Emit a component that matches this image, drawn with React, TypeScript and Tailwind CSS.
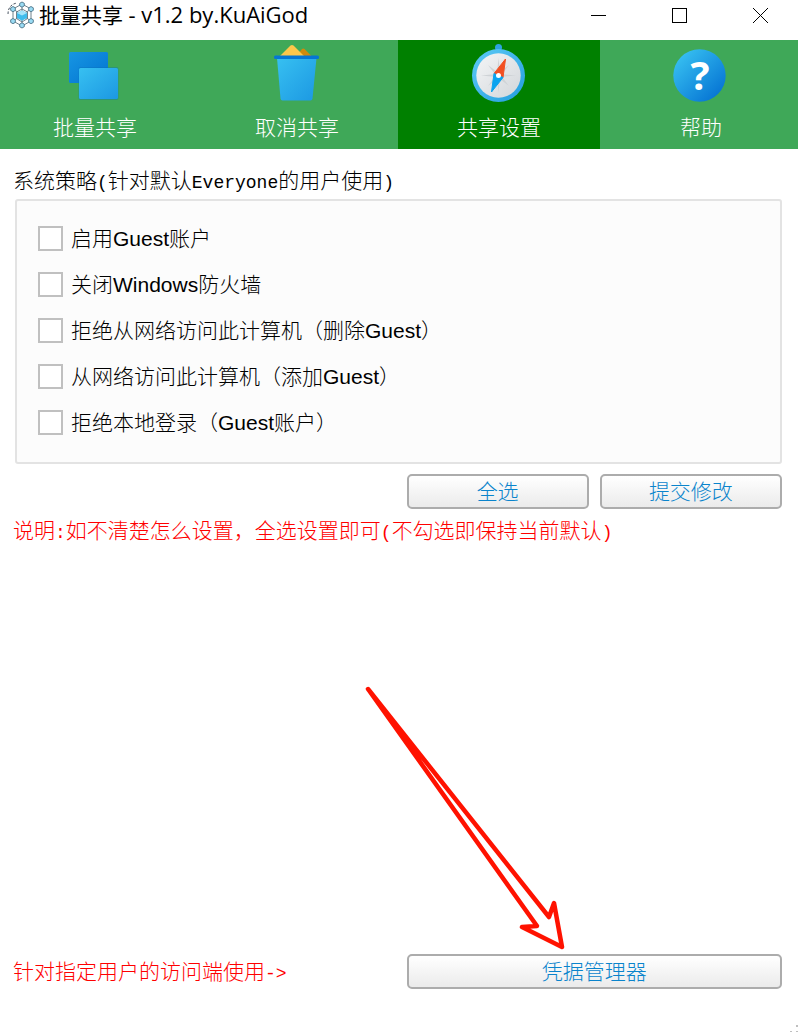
import { useState } from "react";

type Policy = {
  id: string;
  label: string;
};

const policies: Policy[] = [
  { id: "enable-guest", label: "启用Guest账户" },
  { id: "firewall", label: "关闭Windows防火墙" },
  { id: "deny-network", label: "拒绝从网络访问此计算机（删除Guest）" },
  { id: "allow-network", label: "从网络访问此计算机（添加Guest）" },
  { id: "deny-local", label: "拒绝本地登录（Guest账户）" },
];

const AppLogo = () => (
  <svg width="28" height="28" viewBox="0 0 28 28" fill="none" aria-hidden="true">
    <g stroke="#5d7480" strokeWidth="0.9">
      <path d="M15 3v22M6 8l18 12M24 8L6 20M6 8v12l9 5 9-5V8l-9-5z" />
      <path d="M15 8l5.500 3v6.500L15 21l-5.500-3.500V11z" />
    </g>
    <path d="M1 13C1 7 4 3 10 2" stroke="#4b5563" strokeDasharray="2.500 1.500" />
    <g fill="#9adcf5" stroke="#4d7488" strokeWidth="0.9">
      <path d="M15 1l2.300 1.300v2.600L15 6.200l-2.300-1.300V2.300z" />
      <path d="M6 5.500l2.300 1.300v2.600L6 10.700 3.700 9.400V6.800z" />
      <path d="M24 5.500l2.300 1.300v2.600L24 10.700l-2.300-1.300V6.800z" />
      <path d="M6 17.500l2.300 1.300v2.600L6 22.700l-2.300-1.300v-2.600z" />
      <path d="M24 17.500l2.300 1.300v2.600L24 22.700l-2.300-1.300v-2.600z" />
      <path d="M15 21.800l2.300 1.300v2.600L15 27l-2.300-1.300v-2.600z" />
    </g>
    <path d="M15 9.500l5 2.500v5l-5 2.700-5-2.700v-5z" fill="#3fbcec" />
    <path d="M15 9.500l5 2.500-5 2.500-5-2.500z" fill="#a5e4fa" />
  </svg>
);

const ShareIcon = () => (
  <svg width="60" height="60" viewBox="0 0 60 60" aria-hidden="true">
    <defs>
      <linearGradient id="shareBack" x1="0" y1="0" x2="1" y2="1">
        <stop offset="0" stopColor="#1796e3" />
        <stop offset="1" stopColor="#0273d0" />
      </linearGradient>
      <linearGradient id="shareFront" x1="0" y1="0" x2="1" y2="1">
        <stop offset="0" stopColor="#37c0f1" />
        <stop offset="1" stopColor="#1c98e2" />
      </linearGradient>
    </defs>
    <rect x="4" y="8" width="39" height="31" rx="1.500" fill="url(#shareBack)" />
    <rect x="13.500" y="23" width="40" height="33" rx="2" fill="#0a6fb5" opacity="0.35" />
    <rect x="14" y="24" width="39" height="31" rx="1.500" fill="url(#shareFront)" />
  </svg>
);

const BinIcon = () => (
  <svg width="60" height="60" viewBox="0 0 60 60" aria-hidden="true">
    <defs>
      <linearGradient id="binBody" x1="0" y1="0" x2="1" y2="1">
        <stop offset="0" stopColor="#37c0f1" />
        <stop offset="1" stopColor="#1c98e2" />
      </linearGradient>
    </defs>
    <path d="M29 12l6-7q1.200-1 2.500 0l7 7z" fill="#d18a0c" />
    <path d="M13 12L23.500 1.500q1.500-1 3 0L37 12z" fill="#fdc74b" />
    <path d="M10 14h39.500l-4 40.500q-.2 2-2 2h-28q-1.800 0-2-2z" fill="url(#binBody)" />
    <rect x="7" y="11.500" width="45" height="3.500" rx="1.500" fill="#0576d4" />
  </svg>
);

const CompassIcon = () => (
  <svg width="60" height="60" viewBox="0 0 60 60" aria-hidden="true">
    <defs>
      <linearGradient id="compassRing" x1="0" y1="0" x2="1" y2="1">
        <stop offset="0" stopColor="#5ecbf6" />
        <stop offset="1" stopColor="#239ddf" />
      </linearGradient>
      <linearGradient id="compassFace" x1="0" y1="0" x2="1" y2="1">
        <stop offset="0" stopColor="#f4f5f6" />
        <stop offset="1" stopColor="#d2d6da" />
      </linearGradient>
    </defs>
    <circle cx="29.500" cy="3.500" r="3.500" fill="#2ea3e0" />
    <circle cx="29.500" cy="31.500" r="26.500" fill="url(#compassRing)" />
    <circle cx="29.500" cy="31.500" r="22.200" fill="url(#compassFace)" />
    <path
      d="M29.500 14l1.500 16L47 31.500 31 33l-1.500 16L28 33l-16-1.500L28 30zM19 21l10.500 8L40 21l-8 10.500L40 42l-10.500-8L19 42l8-10.500z"
      fill="#cfd3d6"
    />
    <path d="M36.500 15L25 29.500l9 4z" fill="#f25022" stroke="#f25022" strokeLinejoin="round" />
    <path d="M22.500 48L25 29.500l9 4z" fill="#0aa3ef" stroke="#0aa3ef" strokeLinejoin="round" />
    <circle cx="29.500" cy="31.500" r="2.500" fill="#fff" />
  </svg>
);

const HelpIcon = () => (
  <svg width="60" height="60" viewBox="0 0 60 60" aria-hidden="true">
    <defs>
      <linearGradient id="helpDisc" x1="0.1" y1="0.1" x2="0.9" y2="0.9">
        <stop offset="0" stopColor="#37c0f1" />
        <stop offset="1" stopColor="#0573d3" />
      </linearGradient>
    </defs>
    <circle cx="28.500" cy="31.500" r="26.200" fill="url(#helpDisc)" />
    <text
      x="29"
      y="46"
      textAnchor="middle"
      fill="#fff"
      className="font-['Open_Sans',sans-serif] text-[40px] font-bold"
    >
      ?
    </text>
  </svg>
);

const tabs = [
  { name: "批量共享", icon: <ShareIcon /> },
  { name: "取消共享", icon: <BinIcon /> },
  { name: "共享设置", icon: <CompassIcon /> },
  { name: "帮助", icon: <HelpIcon /> },
];

const TitleBar = () => (
  <header className="flex items-start justify-between h-10 pl-[7px]">
    <div className="flex items-center gap-1">
      <AppLogo />
      <h1 className="font-['Open_Sans','Noto_Sans_CJK_SC',sans-serif] text-[21px] leading-[30px] font-normal">
        批量共享 <span className="text-[22px] leading-none">- v1.2 by.KuAiGod</span>
      </h1>
    </div>
    <div className="flex gap-1.5">
      <button aria-label="最小化" className="w-[75px] h-[30px] flex items-center justify-center">
        <svg width="15" height="15" viewBox="0 0 15 15" shapeRendering="crispEdges">
          <path d="M0 7.500h15" stroke="#000" />
        </svg>
      </button>
      <button aria-label="最大化" className="w-[75px] h-[30px] flex items-center justify-center">
        <svg width="15" height="15" viewBox="0 0 15 15" shapeRendering="crispEdges">
          <rect x="0.5" y="0.5" width="14" height="14" fill="none" stroke="#000" />
        </svg>
      </button>
      <button aria-label="关闭" className="w-[75px] h-[30px] flex items-center justify-center">
        <svg width="15" height="15" viewBox="0 0 15 15">
          <path d="M0 0l15 15M15 0L0 15" stroke="#000" />
        </svg>
      </button>
    </div>
  </header>
);

const Mono = ({ text }: { text: string }) => (
  <span className="font-['Liberation_Mono',monospace] text-[18px] leading-none">{text}</span>
);

const PushButton = ({ label, onClick }: { label: string; onClick?: () => void }) => (
  <button
    onClick={onClick}
    className="w-full h-[35px] flex items-center justify-center rounded-[5px] border-2 border-[#acacac] bg-linear-to-b from-white to-[#ebebeb] text-[#0a84cc] leading-7"
  >
    {label}
  </button>
);

const App = () => {
  const [active, setActive] = useState("共享设置");
  const [checked, setChecked] = useState<string[]>([]);

  const toggle = (id: string) =>
    setChecked((prev) => (prev.includes(id) ? prev.filter((p) => p !== id) : [...prev, id]));

  return (
    <div className="relative min-h-screen flex flex-col overflow-hidden bg-white text-black font-light text-[21px] leading-7 font-['Liberation_Sans','Noto_Sans_CJK_SC',sans-serif]">
      <TitleBar />
      {/* TABS */}
      <nav className="flex -ml-1.5 -mr-1 bg-[#3fa858]">
        {tabs.map((tab) => (
          <button
            key={tab.name}
            onClick={() => setActive(tab.name)}
            className={`flex-1 flex flex-col items-center gap-2.5 pt-1 pb-[7px] text-white ${
              active === tab.name ? "bg-[#008000]" : ""
            }`}
          >
            {tab.icon}
            <span>{tab.name}</span>
          </button>
        ))}
      </nav>
      <main className="flex-1 flex flex-col pt-[18px] pb-11 pl-[15px] pr-4">
        <h2 className="-ml-0.5">
          系统策略
          <Mono text="(" />
          针对默认
          <Mono text="Everyone" />
          的用户使用
          <Mono text=")" />
        </h2>
        {/* POLICIES */}
        <div className="mt-1 flex flex-col gap-[21px] rounded-[3px] border-2 border-[#e3e3e3] bg-[#fcfcfc] px-[21px] pt-[25px] pb-[27px]">
          {policies.map((item) => (
            <label key={item.id} htmlFor={item.id} className="flex items-center gap-2 h-[25px]">
              <input
                id={item.id}
                type="checkbox"
                checked={checked.includes(item.id)}
                onChange={() => toggle(item.id)}
                className="appearance-none w-[25px] h-[25px] border-2 border-[#c0c0c0] bg-white checked:bg-[#0a84cc]"
              />
              <span>{item.label}</span>
            </label>
          ))}
        </div>
        <div className="mt-2.5 grid grid-cols-2 gap-4">
          <div className="col-start-2 grid grid-cols-2 gap-[11px]">
            <PushButton label="全选" onClick={() => setChecked(policies.map((p) => p.id))} />
            <PushButton label="提交修改" />
          </div>
        </div>
        <p className="mt-2 -ml-0.5 text-[#ff0000]">
          说明
          <Mono text=":" />
          如不清楚怎么设置，全选设置即可
          <Mono text="(" />
          不勾选即保持当前默认
          <Mono text=")" />
        </p>
        {/* CREDENTIALS */}
        <div className="mt-auto grid grid-cols-2 gap-4 items-center">
          <p className="-ml-0.5 text-[#ff0000]">
            针对指定用户的访问端使用
            <Mono text="->" />
          </p>
          <div className="relative">
            <svg
              width="204"
              height="269"
              viewBox="0 0 204 269"
              className="absolute bottom-full -left-11 pointer-events-none"
              aria-hidden="true"
            >
              <path
                d="M5 4l181 228 5-14 8 44-40-20 15-1z"
                fill="none"
                stroke="#ff1200"
                strokeWidth="4.500"
                strokeLinejoin="round"
              />
            </svg>
            <PushButton label="凭据管理器" />
          </div>
        </div>
      </main>
      {/* RESIZE GRIP */}
      <svg
        width="8"
        height="8"
        viewBox="0 0 8 8"
        className="absolute bottom-0 right-0"
        shapeRendering="crispEdges"
        aria-hidden="true"
      >
        <path d="M6 0h2v2H6zM0 6h2v1H0zM6 6h2v1H6z" fill="#bfbfbf" />
      </svg>
    </div>
  );
};

export default App;
